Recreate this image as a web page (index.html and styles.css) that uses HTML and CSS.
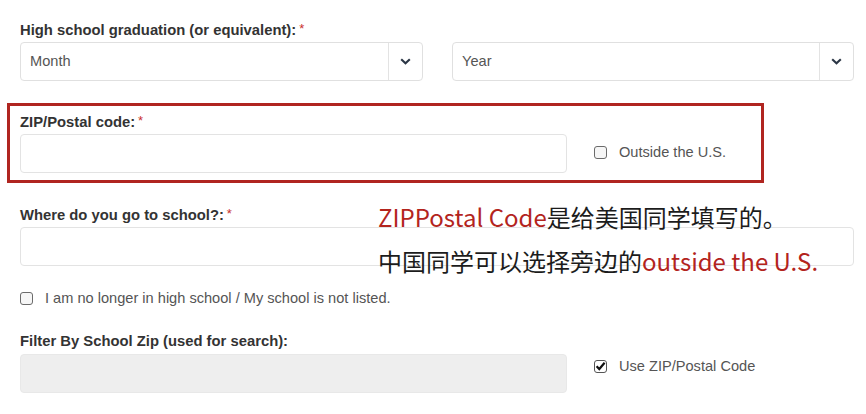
FILE: index.html
```html
<!DOCTYPE html>
<html lang="en">
<head>
<meta charset="utf-8">
<title>Form</title>
<link rel="stylesheet" href="styles.css">
</head>
<body>
<div class="page">
  <div class="grid-two group g1">
    <div class="field">
      <label class="lbl">High school graduation (or equivalent):<span class="req">*</span></label>
      <div class="select">
        <span class="select-text">Month</span>
        <span class="addon"><svg width="11" height="7" viewBox="0 0 11 7"><path d="M1.2 1.2 L5.5 5.3 L9.8 1.2" fill="none" stroke="#2b3645" stroke-width="2.1"/></svg></span>
      </div>
    </div>
    <div class="field">
      <label class="lbl">&nbsp;</label>
      <div class="select">
        <span class="select-text">Year</span>
        <span class="addon"><svg width="11" height="7" viewBox="0 0 11 7"><path d="M1.2 1.2 L5.5 5.3 L9.8 1.2" fill="none" stroke="#2b3645" stroke-width="2.1"/></svg></span>
      </div>
    </div>
  </div>

  <div class="group g2">
    <label class="lbl">ZIP/Postal code:<span class="req">*</span></label>
    <div class="grid-side">
      <div class="input"></div>
      <div class="check-row side-zip">
        <span class="box"></span>
        <span class="check-text">Outside the U.S.</span>
      </div>
    </div>
  </div>

  <div class="group g3">
    <label class="lbl">Where do you go to school?:<span class="req">*</span></label>
    <div class="input"></div>
  </div>

  <div class="check-row g-check">
    <span class="box"></span>
    <span class="check-text">I am no longer in high school / My school is not listed.</span>
  </div>

  <div class="group g4">
    <label class="lbl">Filter By School Zip (used for search):</label>
    <div class="grid-side">
      <div class="input disabled"></div>
      <div class="check-row side-filter">
        <span class="box checked"><svg width="11" height="10" viewBox="0 0 11 10"><path d="M1.6 5.2 L4.3 8 L9.6 1.8" fill="none" stroke="#111" stroke-width="2.2"/></svg></span>
        <span class="check-text">Use ZIP/Postal Code</span>
      </div>
    </div>
  </div>

  <div class="highlight"></div>
  <div class="note">
    <p class="note-line"><span class="red">ZIPPostal Code</span>是给美国同学填写的。</p>
    <p class="note-line"><span class="dark">中国同学可以选择旁边的</span><span class="red">outside the U.S.</span></p>
  </div>
</div>
</body>
</html>
```
FILE: styles.css
```css
* { box-sizing: border-box; }
html, body { margin: 0; padding: 0; background: #fff; }
body {
  font-family: "Liberation Sans", Arial, sans-serif;
  font-size: 14px;
  color: #333;
}
.page {
  position: relative;
  width: 866px;
  height: 414px;
  padding: 19px 12px 0 20px;
  overflow: hidden;
}
.group { display: block; }
.lbl {
  display: block;
  font-weight: bold;
  font-size: 14.8px;
  line-height: 20px;
  height: 20px;
  margin-bottom: 3px;
  color: #333;
  white-space: nowrap;
}
.req { color: #c9302c; font-weight: normal; margin-left: 3px; font-size: 13px; vertical-align: 2px; }
.grid-two {
  display: grid;
  grid-template-columns: 403px 402px;
  column-gap: 29px;
}
.grid-side {
  display: grid;
  grid-template-columns: 547px auto;
  column-gap: 27px;
  align-items: start;
}
.select {
  display: flex;
  height: 39px;
  border: 1px solid #e0e0e0;
  border-radius: 4px;
  background: #fff;
}
.select-text {
  flex: 1;
  padding-left: 9px;
  line-height: 36px;
  color: #555;
  font-size: 14.6px;
}
.addon {
  width: 34px;
  border-left: 1px solid #e3e3e3;
  display: flex;
  align-items: center;
  justify-content: center;
}
.input {
  height: 39px;
  border: 1px solid #e3e3e3;
  border-radius: 4px;
  background: #fff;
}
.input.disabled { background: #eeeeee; border-color: #e8e8e8; }
.g2 { margin-top: 30px; }
.g3 { margin-top: 31px; }
.g-check { margin-top: 22px; }
.g4 { margin-top: 23px; }
.check-row {
  display: flex;
  align-items: center;
  height: 20px;
}
.side-zip { margin-top: 8px; }
.side-filter { margin-top: 2px; }
.box {
  width: 13px;
  height: 13px;
  border: 1px solid #6b6b6b;
  border-radius: 3px;
  background: #f6f6f6;
  margin-right: 12px;
  display: flex;
  align-items: center;
  justify-content: center;
  flex: none;
}
.box.checked { background: #fff; border-color: #555; }
.check-text { color: #555; font-size: 14.6px; line-height: 20px; white-space: nowrap; }
.highlight {
  position: absolute;
  left: 7px;
  top: 103px;
  width: 757px;
  height: 80px;
  border: 3px solid #b02520;
}
.note {
  position: absolute;
  left: 378px;
  top: 195px;
  font-family: "Noto Sans CJK SC", "Noto Sans", sans-serif;
  font-size: 24px;
  color: #1c1c1c;
}
.note-line { margin: 0; line-height: 44px; white-space: nowrap; }
.red { color: #b3241d; }
.dark { color: #1c1c1c; }
```
